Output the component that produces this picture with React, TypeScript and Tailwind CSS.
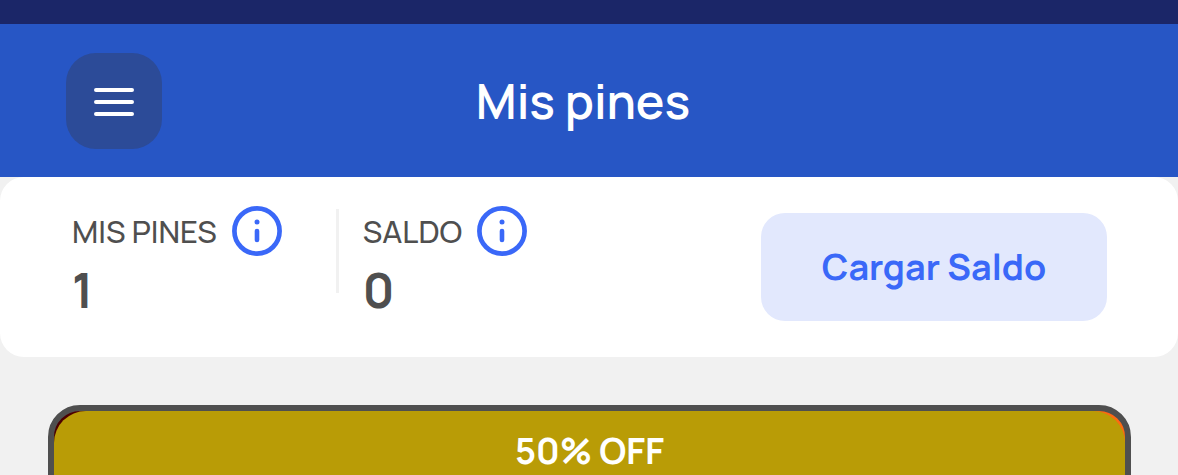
function InfoIcon() {
  return (
    <svg viewBox="0 0 50 50" className="size-[50px]" fill="none" aria-hidden="true">
      <circle cx="25" cy="25" r="22.6" stroke="#3a68f8" strokeWidth="4.7" />
      <circle cx="25" cy="16" r="2.5" fill="#3a68f8" />
      <path d="M25 25v9" stroke="#3a68f8" strokeWidth="4.6" strokeLinecap="round" />
    </svg>
  );
}

function Stat({ label, value }: { label: string; value: number }) {
  return (
    <div className="text-[#4f4f4f]">
      <div className="flex items-center gap-[15px]">
        <span className="text-[31px] leading-[50px] font-medium">{label}</span>
        <button type="button" aria-label={`Información: ${label}`}>
          <InfoIcon />
        </button>
      </div>
      <p className="mt-1 text-5xl leading-[60px] font-bold">{value}</p>
    </div>
  );
}

export default function App() {
  return (
    <div className="h-screen overflow-hidden bg-[#f1f1f1] font-['Manrope','Inter',sans-serif]">
      <div className="h-6 bg-[#1b2668]" />
      <header className="flex h-[153px] items-center bg-[#2756c5] pr-[78px] pl-[66px] text-white">
        <button
          type="button"
          aria-label="Menú"
          className="flex size-24 items-center justify-center rounded-[30px] bg-[#2c4b98]"
        >
          <svg viewBox="0 0 40 30" className="h-[30px] w-10" stroke="currentColor" strokeWidth="4" strokeLinecap="round">
            <path d="M2 4h36M2 16h36M2 28h36" />
          </svg>
        </button>
        <h1 className="flex-1 text-center text-5xl leading-[60px] font-semibold">Mis pines</h1>
        <div className="w-24" />
      </header>
      <section className="flex h-[180px] items-start rounded-3xl bg-white pt-[29px] pr-[71px] pl-[72px]">
        <Stat label="MIS PINES" value={1} />
        <div className="mt-[3px] mr-6 ml-[54px] h-[84px] w-[3px] bg-[#f1f1f1]" />
        <Stat label="SALDO" value={0} />
        <button
          type="button"
          className="mt-[7px] ml-auto h-[108px] w-[346px] rounded-3xl bg-[#e2e8fd] text-4xl font-bold text-[#3a68f8]"
        >
          Cargar Saldo
        </button>
      </section>
      <main className="pt-12 pr-[47px] pl-12">
        <article className="h-64 overflow-hidden rounded-[32px] border-[6px] border-[#4f4f4f] bg-linear-to-r from-[#4a0000] via-[#c01010] to-[#ff6a12]">
          <div className="h-full rounded-[32px] bg-[#b99c06] pt-5 text-center text-4xl leading-10 font-bold text-white">
            50% OFF
          </div>
        </article>
      </main>
    </div>
  );
}
